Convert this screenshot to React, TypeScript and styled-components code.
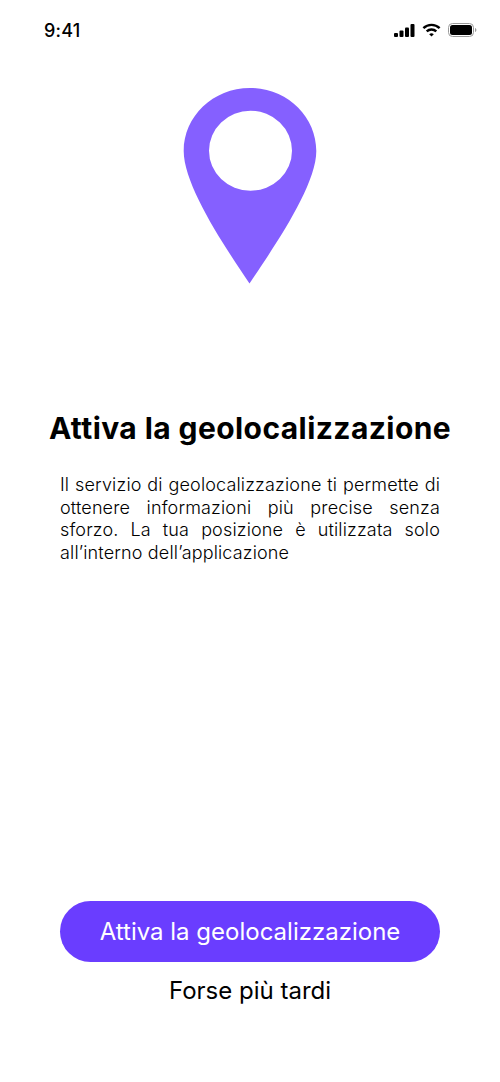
import { createGlobalStyle } from "styled-components"
import styled from "styled-components"

const GlobalStyle = createGlobalStyle`
  html, body {
    margin: 0;
    padding: 0;
    background: #fff;
    font-family: Inter, "Liberation Sans", sans-serif;
  }
`

const Screen = styled.div`
  width: 500px;
  height: 1082px;
  overflow: hidden;
  background: #fff;
  color: #000;
  display: flex;
  flex-direction: column;
  align-items: center;
`

const StatusBar = styled.div`
  width: 100%;
  box-sizing: border-box;
  height: 60px;
  padding: 0 23px 0 44px;
  display: flex;
  align-items: center;
  justify-content: space-between;
`

const Clock = styled.span`
  font-size: 18px;
  font-weight: 500;
  letter-spacing: 0.2px;
`

const StatusIcons = styled.div`
  display: flex;
  align-items: center;
  gap: 7px;
`

const Pin = styled.svg`
  display: block;
  margin-top: 28px;
  width: 134px;
  height: 196px;
  flex: none;
`

const Title = styled.h1`
  margin: 116px 0 0;
  font-size: 30px;
  line-height: 56px;
  font-weight: 700;
  letter-spacing: 0.42px;
  white-space: nowrap;
`

const Description = styled.p`
  margin: 18px 0 0;
  width: 380px;
  font-size: 18px;
  line-height: 22.5px;
  font-weight: 300;
  letter-spacing: 0.15px;
  text-align: justify;
  color: #000;
`

const Actions = styled.div`
  margin-top: auto;
  margin-bottom: 69px;
  width: 380px;
  display: flex;
  flex-direction: column;
  align-items: center;
`

const PrimaryButton = styled.button`
  width: 100%;
  height: 61px;
  border: none;
  border-radius: 30.5px;
  background: #6a3dff;
  color: #fff;
  font-family: inherit;
  font-size: 24px;
  font-weight: 400;
  cursor: pointer;
`

const LaterLink = styled.button`
  margin-top: 6px;
  height: 45px;
  border: none;
  background: none;
  color: #000;
  font-family: inherit;
  font-size: 24px;
  font-weight: 400;
  cursor: pointer;
`

export default function App() {
  return (
    <Screen>
      <GlobalStyle />
      <StatusBar>
        <Clock>9:41</Clock>
        <StatusIcons>
          <svg width="21" height="13" viewBox="0 0 21 13" fill="#000">
            <rect x="0" y="9" width="4" height="4" rx="1" />
            <rect x="5.5" y="6.5" width="4" height="6.5" rx="1" />
            <rect x="11" y="3.5" width="4" height="9.5" rx="1" />
            <rect x="16.5" y="0" width="4" height="13" rx="1" />
          </svg>
          <svg width="19" height="14" viewBox="0 0 19 14" fill="none" stroke="#000" strokeWidth="2.4">
            <path d="M1.4 5.2a11.5 11.5 0 0 1 16.2 0" />
            <path d="M4.7 8.4a6.9 6.9 0 0 1 9.6 0" />
            <path d="M9.5 13.6 7.2 11.3a3.3 3.3 0 0 1 4.6 0Z" fill="#000" stroke="none" />
          </svg>
          <svg width="29" height="14" viewBox="0 0 29 14" fill="none">
            <rect x="0.5" y="0.5" width="25" height="13" rx="4" stroke="#9a9a9a" />
            <rect x="2" y="2" width="22" height="10" rx="2.5" fill="#000" />
            <path d="M27 5v4c.8-.3 1.400-1.100 1.400-2S27.800 5.300 27 5Z" fill="#9a9a9a" />
          </svg>
        </StatusIcons>
      </StatusBar>

      <Pin viewBox="0 0 134 196">
        <path
          fillRule="evenodd"
          fill="#8560ff"
          d="M67 0C30 0 .7 28.500 .7 63C.7 98 42 159 66.500 195.500C91 159 133.300 98 133.300 63C133.300 28.500 104 0 67 0ZM26 62.700a41.500 40 0 1 0 83 0a41.500 40 0 1 0 -83 0Z"
        />
      </Pin>

      <Title>Attiva la geolocalizzazione</Title>
      <Description>
        Il servizio di geolocalizzazione ti permette di ottenere informazioni più precise senza
        sforzo. La tua posizione è utilizzata solo all’interno dell’applicazione
      </Description>

      <Actions>
        <PrimaryButton>Attiva la geolocalizzazione</PrimaryButton>
        <LaterLink>Forse più tardi</LaterLink>
      </Actions>
    </Screen>
  )
}
